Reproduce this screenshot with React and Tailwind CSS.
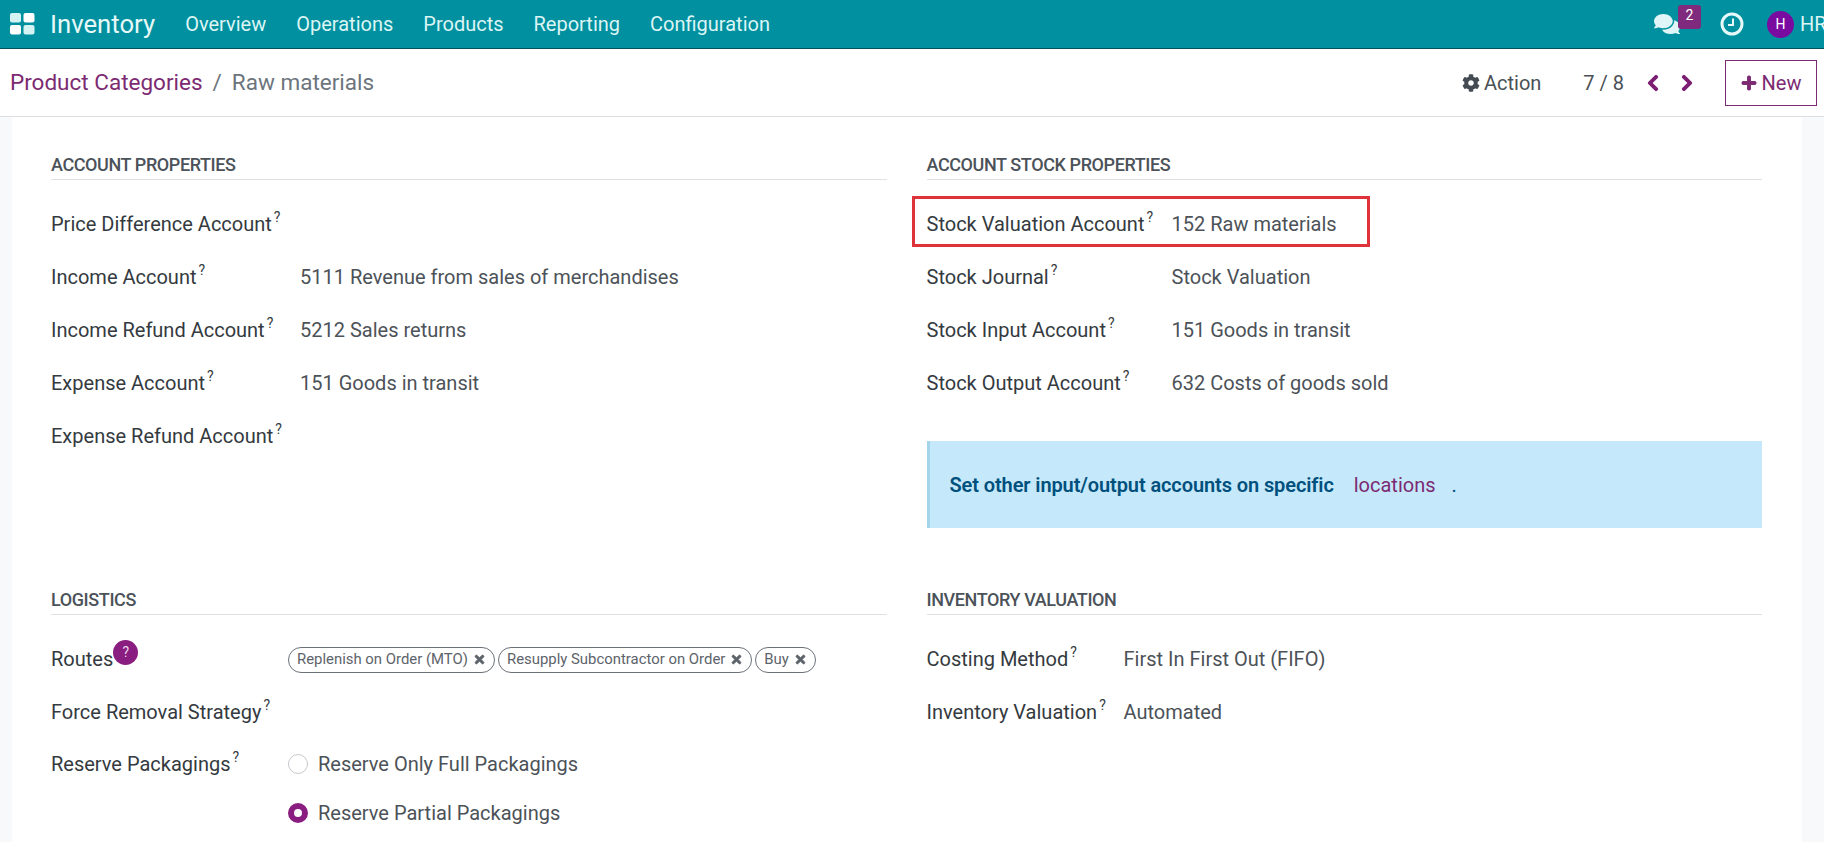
import React from "react";
import { FaCog, FaChevronLeft, FaChevronRight, FaPlus, FaComments, FaTimes } from "react-icons/fa";

const navLinks = ["Overview", "Operations", "Products", "Reporting", "Configuration"];

const accountRows = [
  { label: "Price Difference Account", value: "" },
  { label: "Income Account", value: "5111 Revenue from sales of merchandises" },
  { label: "Income Refund Account", value: "5212 Sales returns" },
  { label: "Expense Account", value: "151 Goods in transit" },
  { label: "Expense Refund Account", value: "" },
];

const stockRows = [
  { label: "Stock Journal", value: "Stock Valuation" },
  { label: "Stock Input Account", value: "151 Goods in transit" },
  { label: "Stock Output Account", value: "632 Costs of goods sold" },
];

const valuationRows = [
  { label: "Costing Method", value: "First In First Out (FIFO)" },
  { label: "Inventory Valuation", value: "Automated" },
];

const routes = ["Replenish on Order (MTO)", "Resupply Subcontractor on Order", "Buy"];

function AppsIcon() {
  return (
    <svg width="25" height="22" viewBox="0 0 25 22" className="shrink-0">
      <rect x="0" y="0" width="11" height="9.5" rx="2" fill="#d5f3f3" />
      <rect x="13.5" y="0" width="11" height="9.5" rx="2" fill="#ffffff" />
      <rect x="0" y="12" width="11" height="9.5" rx="2" fill="#ffffff" />
      <rect x="13.5" y="12" width="11" height="9.5" rx="2" fill="#d5f3f3" />
    </svg>
  );
}

function ClockIcon() {
  return (
    <svg width="24" height="24" viewBox="0 0 24 24" fill="none" stroke="#e6f8f8" className="ml-[40px] shrink-0">
      <circle cx="12" cy="12" r="10" strokeWidth="3" />
      <path d="M13 6.5V13H8" strokeWidth="2" />
    </svg>
  );
}

function Help() {
  return <sup className="text-[14px] font-normal text-[#343a40] ml-[2px] -top-[9px]">?</sup>;
}

function SectionTitle({ children }) {
  return (
    <div className="h-[31px] pt-[1px] flex items-center border-b border-[#dfe1e4] text-[18px] font-medium text-[#4b5259] tracking-[-0.4px]">
      {children}
    </div>
  );
}

function Row({ label, value, labelWidth }) {
  return (
    <div className="flex items-center h-[53px]">
      <div className={`${labelWidth} shrink-0 text-[#343a40]`}>
        {label}
        <Help />
      </div>
      <div className="text-[#4c5258]">{value}</div>
    </div>
  );
}

export default function App() {
  return (
    <div className="h-screen overflow-hidden flex flex-col bg-white text-[20px] font-['Roboto',sans-serif]">
      {/* Top bar */}
      <div className="h-[49px] shrink-0 flex items-center gap-[30px] bg-[#00909f] border-b border-[#00515a] text-[#dcf5f5]">
        <div className="flex items-center">
          <div className="ml-[10px]">
            <AppsIcon />
          </div>
          <div className="ml-[15px] text-[25.7px] text-[#e6f8f8]">Inventory</div>
        </div>
        {navLinks.map((link) => (
          <div key={link}>{link}</div>
        ))}
        <div className="ml-auto flex items-center">
          <div className="relative">
            <FaComments className="text-[26px] text-[#dff5f7]" />
            <span className="absolute -top-[6px] left-[24px] w-[23px] h-[24px] rounded-[3px] bg-[#7f2a7c] text-white text-[14px] leading-[20px] text-center">
              2
            </span>
          </div>
          <ClockIcon />
          <div className="ml-[23px] w-[27px] h-[27px] rounded-full bg-[#7a0ba0] text-white text-[14px] flex items-center justify-center">
            H
          </div>
          <div className="ml-[6px] w-[24px] overflow-hidden whitespace-nowrap">HR</div>
        </div>
      </div>

      {/* Control panel */}
      <div className="h-[68px] shrink-0 flex items-center justify-between border-b border-[#dcdee1] pl-[10px] pr-[7px] text-[#4a5056]">
        <div className="text-[22.5px] flex items-center">
          <span className="text-[#7c2a72]">Product Categories</span>
          <span className="mx-[10px] text-[#6c757d]">/</span>
          <span className="text-[#6c757d]">Raw materials</span>
        </div>
        <div className="flex items-center">
          <FaCog className="text-[18px] text-[#454b52]" />
          <span className="ml-[4px]">Action</span>
          <span className="ml-[42px]">7 / 8</span>
          <FaChevronLeft stroke="currentColor" strokeWidth="30" className="ml-[20px] text-[18px] text-[#7c1f72]" />
          <FaChevronRight stroke="currentColor" strokeWidth="30" className="ml-[16px] text-[18px] text-[#7c1f72]" />
          <div className="ml-[29px] w-[92px] h-[46px] border border-[#7c2a72] flex items-center justify-center gap-[5px] text-[#7c2a72]">
            <FaPlus stroke="currentColor" strokeWidth="30" className="text-[16px]" />
            New
          </div>
        </div>
      </div>

      {/* Sheet */}
      <div className="flex-1 min-h-0 bg-[#f8f9fa] pl-[12px] pr-[22px] overflow-hidden">
        <div className="h-full bg-white pl-[39px] pr-[40px] pt-[32px]">
          <div className="grid grid-cols-2 gap-x-[40px]">
            <div>
              <SectionTitle>ACCOUNT PROPERTIES</SectionTitle>
              <div className="mt-[17px]">
                {accountRows.map((row) => (
                  <Row key={row.label} label={row.label} value={row.value} labelWidth="w-[249px]" />
                ))}
              </div>
            </div>

            <div>
              <SectionTitle>ACCOUNT STOCK PROPERTIES</SectionTitle>
              <div className="mt-[17px]">
                <div className="flex items-center h-[53px] relative">
                  <div className="w-[245px] shrink-0 text-[#343a40]">
                    Stock Valuation Account
                    <Help />
                  </div>
                  <div className="text-[#4c5258]">152 Raw materials</div>
                  <div className="absolute -left-[15px] top-[-1px] w-[458px] h-[51px] border-[3px] border-[#e0323a]" />
                </div>
                {stockRows.map((row) => (
                  <Row key={row.label} label={row.label} value={row.value} labelWidth="w-[245px]" />
                ))}
              </div>
              <div className="mt-[32px] h-[87px] flex items-center bg-[#c5e9fb] border-l-[3px] border-[#a3d4ea] pl-[20px]">
                <span className="font-semibold text-[#00507d] tracking-[-0.1px]">Set other input/output accounts on specific</span>
                <span className="ml-[20px] text-[#7c2a72]">locations</span>
                <span className="ml-[16px] text-[#00507d]">.</span>
              </div>
              <div className="h-[56px]" />
            </div>

            <div>
              <SectionTitle>LOGISTICS</SectionTitle>
              <div className="mt-[17px]">
                <div className="flex items-center h-[53px]">
                  <div className="w-[237px] shrink-0 flex items-center text-[#343a40]">
                    Routes
                    <span className="-mt-[12px] w-[25px] h-[25px] rounded-full bg-[#8a1d80] text-[#e9d5e8] text-[14px] flex items-center justify-center">
                      ?
                    </span>
                  </div>
                  <div className="flex items-center gap-[3px] mt-[2px]">
                    {routes.map((route) => (
                      <span
                        key={route}
                        className="h-[26px] flex items-center gap-[5px] pl-[8px] pr-[8px] rounded-full border border-[#6b7178] text-[14.9px] text-[#5d636a] whitespace-nowrap"
                      >
                        {route}
                        <FaTimes stroke="currentColor" strokeWidth="30" className="text-[13px] text-[#5d636a]" />
                      </span>
                    ))}
                  </div>
                </div>
                <Row label="Force Removal Strategy" value="" labelWidth="w-[237px]" />
                <div className="flex items-center h-[51px]">
                  <div className="w-[237px] shrink-0 text-[#343a40]">
                    Reserve Packagings
                    <Help />
                  </div>
                  <div className="w-[20px] h-[20px] rounded-full border border-[#c5c8cc]" />
                  <div className="ml-[10px] text-[#4c5258]">Reserve Only Full Packagings</div>
                </div>
                <div className="flex items-center h-[48px] pl-[237px]">
                  <div className="w-[20px] h-[20px] rounded-full border-[6px] border-[#8a1d80]" />
                  <div className="ml-[10px] text-[#4c5258]">Reserve Partial Packagings</div>
                </div>
              </div>
            </div>

            <div>
              <SectionTitle>INVENTORY VALUATION</SectionTitle>
              <div className="mt-[17px]">
                {valuationRows.map((row) => (
                  <Row key={row.label} label={row.label} value={row.value} labelWidth="w-[197px]" />
                ))}
              </div>
            </div>
          </div>
        </div>
      </div>
    </div>
  );
}
